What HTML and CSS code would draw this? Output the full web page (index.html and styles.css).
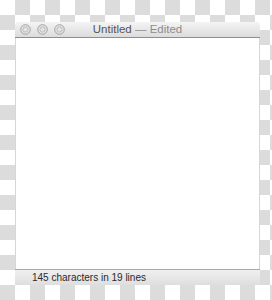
FILE: index.html
```html
<!DOCTYPE html>
<html lang="en">
<head>
    <meta charset="UTF-8">
    <meta name="viewport" content="width=device-width, initial-scale=1.0">
    <title>Untitled — Edited</title>
    <link rel="stylesheet" href="styles.css">
</head>
<body>
    <div class="window">
        <div class="titlebar">
            <div class="lights">
                <svg class="light" width="11" height="11" viewBox="0 0 11 11">
                    <circle cx="5.5" cy="5.5" r="4.8" fill="#e4e4e4" stroke="#a2a2a2"/>
                    <circle cx="5.5" cy="5.5" r="2.6" fill="none" stroke="#bdbdbd"/>
                </svg>
                <svg class="light" width="11" height="11" viewBox="0 0 11 11">
                    <circle cx="5.5" cy="5.5" r="4.8" fill="#e4e4e4" stroke="#a2a2a2"/>
                    <circle cx="5.5" cy="5.5" r="2.6" fill="none" stroke="#bdbdbd"/>
                </svg>
                <svg class="light" width="11" height="11" viewBox="0 0 11 11">
                    <circle cx="5.5" cy="5.5" r="4.8" fill="#e4e4e4" stroke="#a2a2a2"/>
                    <circle cx="5.5" cy="5.5" r="2.6" fill="none" stroke="#bdbdbd"/>
                </svg>
            </div>
            <div class="title">Untitled <span class="edited">— Edited</span></div>
        </div>
        <div class="content"></div>
        <div class="statusbar">145 characters in 19 lines</div>
    </div>
</body>
</html>
```

FILE: styles.css
```css
body {
    margin: 0;
    padding: 22px 0 0 15px;
    height: 300px;
    box-sizing: border-box;
    font-family: "Liberation Sans", Arial, sans-serif;
    background-color: #fff;
    background-image: conic-gradient(#dcdcdc 25%, #fff 0 50%, #dcdcdc 0 75%, #fff 0);
    background-size: 30px 30px;
}

.window {
    width: 245px;
    display: flex;
    flex-direction: column;
}

.titlebar {
    position: relative;
    height: 15px;
    display: flex;
    align-items: center;
    background: linear-gradient(#f4f4f4, #dcdcdc);
    border-bottom: 1px solid #8e8e8e;
    border-radius: 3px 3px 0 0;
}

.lights {
    display: flex;
    gap: 6px;
    padding-left: 5px;
}

.light {
    display: block;
}

.title {
    position: absolute;
    left: 0;
    right: 0;
    text-align: center;
    font-size: 11.5px;
    line-height: 15px;
    color: #555;
}

.edited {
    color: #8c8c8c;
}

.content {
    height: 231px;
    background: #fff;
    border-left: 1px solid #d6d6d6;
    border-right: 1px solid #d6d6d6;
}

.statusbar {
    height: 15px;
    padding-left: 17px;
    font-size: 10px;
    line-height: 15px;
    color: #2a2a2a;
    background: linear-gradient(#f0f0f0, #dedede);
    border-top: 1px solid #a8a8a8;
}
```
